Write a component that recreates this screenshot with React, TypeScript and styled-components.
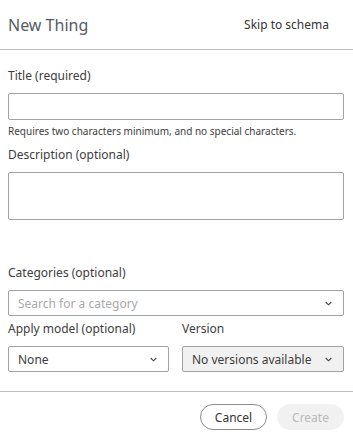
import React from "react";
import styled, { createGlobalStyle } from "styled-components";

const GlobalStyle = createGlobalStyle`
  html, body {
    margin: 0;
    padding: 0;
    background: #fff;
    font-family: "Noto Sans", "Open Sans", sans-serif;
    color: #333;
  }
  * { box-sizing: border-box; }
`;

const Dialog = styled.div`
  width: 353px;
  height: 434px;
  display: flex;
  flex-direction: column;
  background: #fff;
`;

const Header = styled.div`
  height: 50px;
  display: flex;
  align-items: center;
  justify-content: space-between;
  padding: 0 24px 0 8px;
  border-bottom: 1px solid #bdbdbd;
`;

const Heading = styled.h1`
  margin: 0;
  font-size: 16px;
  font-weight: 400;
  color: #555b63;
`;

const LinkButton = styled.button`
  border: none;
  background: none;
  padding: 0;
  font-family: inherit;
  font-size: 12px;
  color: #333;
  cursor: pointer;
`;

const Body = styled.div`
  flex: 1;
  padding: 17px 9px 0 8px;
  display: flex;
  flex-direction: column;
`;

const Label = styled.label`
  display: block;
  font-size: 12px;
  line-height: 18px;
  color: #3d3d3d;
  margin-bottom: 8px;
`;

const TextInput = styled.input`
  width: 100%;
  height: 27px;
  border: 1px solid #9ea3a8;
  border-radius: 2px;
  font-family: inherit;
  font-size: 12px;
  padding: 0 8px;
`;

const TextArea = styled.textarea`
  width: 100%;
  height: 48px;
  border: 1px solid #9ea3a8;
  border-radius: 2px;
  font-family: inherit;
  font-size: 12px;
  padding: 6px 8px;
  resize: none;
  display: block;
`;

const Helper = styled.div`
  font-size: 10px;
  line-height: 14px;
  color: #3d3d3d;
  margin: 4px 0 8px;
`;

const Spacer = styled.div<{ $h: number }>`
  height: ${(p) => p.$h}px;
`;

const Row = styled.div`
  display: grid;
  grid-template-columns: 161px 162px;
  column-gap: 13px;
`;

const Field = styled.div`
  display: flex;
  flex-direction: column;
`;

const Select = styled.div<{ $disabled?: boolean; $placeholder?: boolean }>`
  height: 26px;
  display: flex;
  align-items: center;
  justify-content: space-between;
  padding: 0 11px 0 9px;
  border: 1px solid #9ea3a8;
  border-radius: 2px;
  background: ${(p) => (p.$disabled ? "#f1f1f1" : "#fff")};
  font-size: 12px;
  color: ${(p) => (p.$placeholder ? "#a9a9a9" : "#3d3d3d")};
`;

const Chevron = () => (
  <svg width="7" height="5" viewBox="0 0 7 5" fill="none">
    <path d="M0.7 1l2.8 2.8L6.3 1" stroke="#444" strokeWidth="1.1" />
  </svg>
);

const Footer = styled.div`
  height: 43px;
  border-top: 1px solid #bdbdbd;
  display: flex;
  align-items: flex-start;
  justify-content: flex-end;
  gap: 10px;
  padding: 12px 9px 0 0;
`;

const PillButton = styled.button<{ $primary?: boolean }>`
  width: 67px;
  height: 26px;
  padding: 0;
  border-radius: 13px;
  border: 1px solid ${(p) => (p.$primary ? "#f1f1f1" : "#8c8c8c")};
  background: ${(p) => (p.$primary ? "#f1f1f1" : "#fff")};
  color: ${(p) => (p.$primary ? "#b9b9b9" : "#333")};
  font-family: inherit;
  font-size: 12px;
`;

export default function App() {
  return (
    <>
      <GlobalStyle />
      <Dialog>
        <Header>
          <Heading>New Thing</Heading>
          <LinkButton>Skip to schema</LinkButton>
        </Header>
        <Body>
          <Label>Title (required)</Label>
          <TextInput />
          <Helper>Requires two characters minimum, and no special characters.</Helper>
          <Label>Description (optional)</Label>
          <TextArea />
          <Spacer $h={44} />
          <Label>Categories (optional)</Label>
          <Select $placeholder>
            Search for a category
            <Chevron />
          </Select>
          <Spacer $h={4} />
          <Row>
            <Field>
              <Label>Apply model (optional)</Label>
              <Select>
                None
                <Chevron />
              </Select>
            </Field>
            <Field>
              <Label>Version</Label>
              <Select $disabled>
                No versions available
                <Chevron />
              </Select>
            </Field>
          </Row>
        </Body>
        <Footer>
          <PillButton>Cancel</PillButton>
          <PillButton $primary>Create</PillButton>
        </Footer>
      </Dialog>
    </>
  );
}
